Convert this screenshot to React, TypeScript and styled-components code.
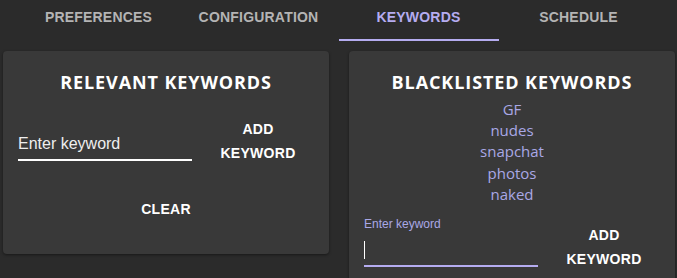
import React, { useState } from 'react';
import styled, { createGlobalStyle } from 'styled-components';

const GlobalStyle = createGlobalStyle`
  html, body {
    margin: 0;
    padding: 0;
    background: #2b2b2b;
  }
  body {
    font-family: 'Liberation Sans', Arial, sans-serif;
    overflow: hidden;
  }
`;

const Page = styled.div`
  width: 677px;
  height: 278px;
  background: #2b2b2b;
  overflow: hidden;
`;

const Tabs = styled.div`
  display: flex;
  justify-content: center;
  height: 41px;
`;

const Tab = styled.div<{ $active?: boolean }>`
  width: 160px;
  display: flex;
  align-items: center;
  justify-content: center;
  padding-bottom: 5px;
  box-sizing: border-box;
  font-family: 'Liberation Sans', Arial, sans-serif;
  font-weight: bold;
  font-size: 14px;
  letter-spacing: 0.2px;
  color: ${(p) => (p.$active ? '#b5acf0' : '#b4b4b4')};
  border-bottom: 2px solid ${(p) => (p.$active ? '#b5acf0' : 'transparent')};
`;

const Columns = styled.div`
  display: grid;
  grid-template-columns: 326px 326px;
  column-gap: 20px;
  padding: 10px 2px 0 3px;
`;

const Card = styled.div<{ $tall?: boolean }>`
  background: #393939;
  border-radius: 4px;
  box-shadow: 0 1px 3px rgba(0, 0, 0, 0.45);
  height: ${(p) => (p.$tall ? '260px' : '203px')};
  padding-top: 19px;
  box-sizing: border-box;
  display: flex;
  flex-direction: column;
`;

const Title = styled.h2`
  margin: 0;
  text-align: center;
  font-family: 'Open Sans', 'Noto Sans', sans-serif;
  font-weight: bold;
  font-size: 18px;
  letter-spacing: 0.9px;
  line-height: 24px;
  color: #ffffff;
`;

const KeywordList = styled.ul`
  list-style: none;
  margin: 5px 0 0;
  padding: 0;
  text-align: center;
`;

const Keyword = styled.li`
  font-family: 'Open Sans', 'Noto Sans', sans-serif;
  font-size: 15px;
  line-height: 21.2px;
  color: #a9a8e6;
`;

const InputRow = styled.div<{ $top: number }>`
  display: flex;
  align-items: flex-end;
  padding-left: 15px;
  margin-top: ${(p) => p.$top}px;
`;

const Field = styled.label<{ $focused?: boolean }>`
  width: 174px;
  display: flex;
  flex-direction: column;
  border-bottom: 2px solid ${(p) => (p.$focused ? '#b5acf0' : '#ffffff')};
  padding-bottom: ${(p) => (p.$focused ? '6px' : '4px')};
`;

const FieldLabel = styled.span`
  font-size: 12px;
  line-height: 14px;
  color: #a9a8e6;
`;

const FieldInput = styled.input`
  background: transparent;
  border: none;
  outline: none;
  padding: 0;
  margin: 0;
  height: 22px;
  font-family: 'Liberation Sans', Arial, sans-serif;
  font-size: 16px;
  color: #ffffff;
  caret-color: #ffffff;
  &::placeholder {
    color: #eeeeee;
    opacity: 1;
  }
`;

const Caret = styled.span`
  display: block;
  width: 1px;
  height: 18px;
  margin-top: 10px;
  background: #ffffff;
`;

const TextButton = styled.button`
  background: none;
  border: none;
  padding: 0;
  cursor: pointer;
  font-family: 'Liberation Sans', Arial, sans-serif;
  font-weight: bold;
  font-size: 14px;
  line-height: 24px;
  letter-spacing: 0.3px;
  color: #ffffff;
  text-align: center;
`;

const AddButton = styled(TextButton)`
  width: 118px;
  margin-left: 7px;
  margin-bottom: -4px;
`;

const ClearRow = styled.div`
  display: flex;
  justify-content: center;
  margin-top: 36px;
`;

const blacklist = ['GF', 'nudes', 'snapchat', 'photos', 'naked'];
const tabs = ['PREFERENCES', 'CONFIGURATION', 'KEYWORDS', 'SCHEDULE'];

const App = () => {
  const [relevant, setRelevant] = useState('');

  return (
    <Page>
      <GlobalStyle />
      <Tabs>
        {tabs.map((t) => (
          <Tab key={t} $active={t === 'KEYWORDS'}>
            {t}
          </Tab>
        ))}
      </Tabs>
      <Columns>
        <Card>
          <Title>RELEVANT KEYWORDS</Title>
          <InputRow $top={23}>
            <Field>
              <FieldInput
                placeholder="Enter keyword"
                value={relevant}
                onChange={(e) => setRelevant(e.target.value)}
              />
            </Field>
            <AddButton>
              ADD
              <br />
              KEYWORD
            </AddButton>
          </InputRow>
          <ClearRow>
            <TextButton>CLEAR</TextButton>
          </ClearRow>
        </Card>
        <Card $tall>
          <Title>BLACKLISTED KEYWORDS</Title>
          <KeywordList>
            {blacklist.map((k) => (
              <Keyword key={k}>{k}</Keyword>
            ))}
          </KeywordList>
          <InputRow $top={12}>
            <Field $focused>
              <FieldLabel>Enter keyword</FieldLabel>
              <Caret />
            </Field>
            <AddButton>
              ADD
              <br />
              KEYWORD
            </AddButton>
          </InputRow>
        </Card>
      </Columns>
    </Page>
  );
};

export default App;
